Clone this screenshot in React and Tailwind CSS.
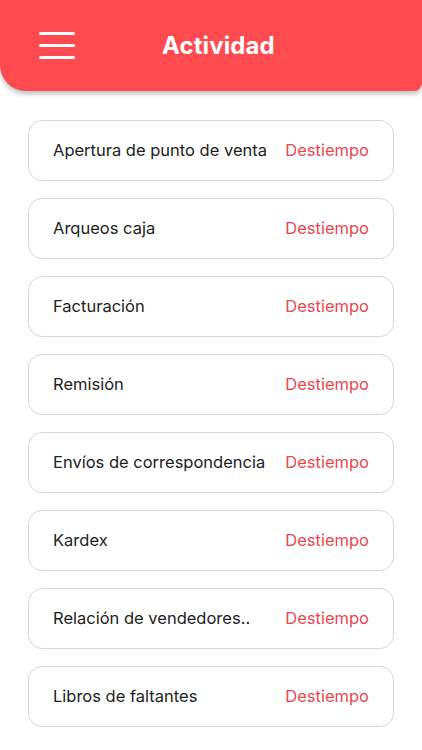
const activities = [
  "Apertura de punto de venta",
  "Arqueos caja",
  "Facturación",
  "Remisión",
  "Envíos de correspondencia",
  "Kardex",
  "Relación de vendedores..",
  "Libros de faltantes",
]

export default function App() {
  return (
    <main className="min-h-screen bg-white font-['Inter',sans-serif]">
      {/* HEADER */}
      <header className="h-[91px] bg-[#ff4a50] rounded-bl-[26px] rounded-br-[8px] shadow-[0_3px_5px_rgba(0,0,0,0.25)] flex items-center">
        <button className="ml-[39px] w-[36px] flex flex-col gap-[8.5px]">
          <span className="block h-[3.5px] rounded-full bg-white" />
          <span className="block h-[3.5px] rounded-full bg-white" />
          <span className="block h-[3.5px] rounded-full bg-white" />
        </button>
        <h1 className="ml-[87px] text-[24px] font-bold text-white tracking-[0.1px]">
          Actividad
        </h1>
      </header>

      {/* LIST */}
      <div className="px-[28px] pt-[29px] flex flex-col gap-[17px]">
        {activities.map((name) => (
          <ActivityRow key={name} name={name} />
        ))}
      </div>
    </main>
  )
}

function ActivityRow({ name }) {
  return (
    <div className="h-[61px] rounded-[14px] border border-[#d8d8d8] flex items-center justify-between px-[24px]">
      <span className="text-[16.5px] text-[#222222]">{name}</span>
      <span className="text-[16.5px] text-[#e9474f]">Destiempo</span>
    </div>
  )
}
